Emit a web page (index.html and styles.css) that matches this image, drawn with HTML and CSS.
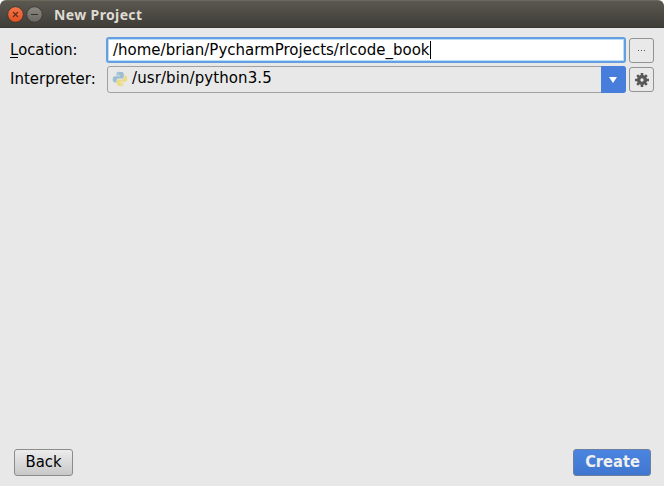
FILE: index.html
```html
<!DOCTYPE html>
<html lang="en">
<head>
<meta charset="utf-8">
<title>New Project</title>
<link rel="stylesheet" href="styles.css">
</head>
<body>
<div class="window">
  <header class="titlebar">
    <svg class="control" viewBox="0 0 17 17"><defs><linearGradient id="orange" x2="0" y2="1"><stop stop-color="#f4774b"/><stop offset="1" stop-color="#e5501f"/></linearGradient></defs><circle cx="8.5" cy="8.5" r="7.8" fill="url(#orange)" stroke="#34332e" stroke-width=".8"/><path d="M6 6l5 5M11 6l-5 5" stroke="#5b2f1c" stroke-width="1.1"/></svg>
    <svg class="control" viewBox="0 0 17 17"><defs><linearGradient id="gray" x2="0" y2="1"><stop stop-color="#8b8982"/><stop offset="1" stop-color="#696760"/></linearGradient></defs><circle cx="8.5" cy="8.5" r="7.8" fill="url(#gray)" stroke="#34332e" stroke-width=".8"/><path d="M5 8.5h7" stroke="#34332e"/></svg>
    <h1 class="title">New Project</h1>
  </header>
  <main class="form">
    <label class="label location"><span class="mnemonic">L</span>ocation:</label>
    <div class="input"><span class="path">/home/brian/PycharmProjects/rlcode_book</span><span class="caret"></span></div>
    <button class="tool dots"><i></i><i></i><i></i></button>
    <label class="label">Interpreter:</label>
    <div class="combo">
      <svg class="python" viewBox="0 0 16 16"><path fill="#9dbdd0" d="M7.8.8C5.2.8 4.4 1.6 4.4 3v1.6h3.8v.6H3C1.4 5.2.7 6.6.7 8.3s.8 3.2 2.2 3.2h1.6V9.8c0-1.4 1-2.2 2.4-2.2h3.1c1.1 0 1.8-.8 1.8-1.9V3c0-1.4-1.4-2.2-4-2.2z"/><path fill="#ecdb86" d="M8.2 15.2c2.6 0 3.4-.8 3.4-2.2v-1.6H7.8v-.6H13c1.6 0 2.3-1.4 2.3-3.1s-.8-3.2-2.2-3.2h-.8v1.8c0 1.4-1 2.2-2.4 2.2H6.7c-1.1 0-1.9.8-1.9 1.9V13c0 1.4 1.2 2.2 3.4 2.2z"/><circle cx="6.2" cy="2.9" r=".6" fill="#d8e4ea"/><circle cx="9.8" cy="13.1" r=".6" fill="#faf7df"/></svg>
      <span class="value">/usr/bin/python3.5</span>
      <span class="arrow"><svg width="8" height="6" viewBox="0 0 8 6"><path d="M0 0h8L4 6z" fill="#fff"/></svg></span>
    </div>
    <button class="tool"><svg width="14" height="14" viewBox="-7 -7 14 14"><g stroke="#585858" stroke-width="2.6"><path d="M0-7V-3M0 3V7M-7 0H-3M3 0H7M-4.8-4.8L-2.2-2.2M2.2 2.2L4.8 4.8M-4.8 4.8L-2.2 2.2M2.2-2.2L4.8-4.8"/></g><circle r="3.4" fill="none" stroke="#585858" stroke-width="3.4"/></svg></button>
  </main>
  <footer class="actions">
    <button class="button back">Back</button>
    <button class="button create">Create</button>
  </footer>
</div>
</body>
</html>
```
FILE: styles.css
```css
* { box-sizing: border-box; }
body { margin: 0; background: #fff; }
.window {
  width: 664px; height: 486px;
  display: flex; flex-direction: column;
  background: #e8e8e8;
  border-radius: 6px 6px 0 0;
  overflow: hidden;
  color: #000;
  font: 16.67px/20px "DejaVu Sans Condensed", "DejaVu Sans", sans-serif;
  font-stretch: condensed;
}
.titlebar {
  height: 28px; flex: none;
  display: flex; align-items: center; gap: 2px;
  padding: 1px 7px 0;
  background: linear-gradient(#5b5850, #3e3d38);
  border-top: 1px solid #6a675f;
  border-bottom: 1px solid #393833;
}
.control { width: 17px; height: 17px; flex: none; }
.title {
  margin: 0 0 0 9px;
  color: #dfdbd2;
  font: bold 14px/20px "Noto Sans", sans-serif;
  letter-spacing: .37px;
  white-space: nowrap;
}
.form {
  flex: 1;
  display: grid;
  grid-template-columns: 96px 520px 25px;
  grid-template-rows: 26px 27px;
  row-gap: 3px; column-gap: 0;
  padding: 9px 10px 0;
  align-content: start;
}
.label { padding-top: 3px; white-space: nowrap; }
.location { font-size: 16.4px; }
.mnemonic { border-bottom: 1px solid #000; display: inline-block; height: 18px; }
.input {
  display: flex; align-items: center;
  height: 26px;
  padding: 0 4px 0 5px;
  background: #fff;
  border: 2px solid #649fe0;
  border-radius: 3px;
  box-shadow: inset 0 0 0 1px #bcdafa;
}
.path { letter-spacing: .015px; }
.caret { width: 1px; height: 18px; background: #000; }
.combo {
  display: flex; align-items: center;
  height: 27px;
  margin-left: 1px;
  padding-left: 4px;
  border: 1px solid #a0a0a0;
  border-radius: 3px;
  background: #e8e8e8;
}
.python { width: 16px; height: 16px; margin: -2px 4px 0 0; }
.value { margin-top: -3px; letter-spacing: .1px; }
.arrow {
  display: flex; align-items: center; justify-content: center;
  width: 25px; height: 27px;
  margin: -1px -1px -1px auto;
  padding-right: 1px;
  background: #477edb;
  border-radius: 0 3px 3px 0;
}
.tool {
  display: flex; align-items: center; justify-content: center;
  width: 25px; height: 25px;
  margin: 1px 0 0 3px;
  padding: 0;
  border: 1px solid #929292;
  border-radius: 3px;
  background: #e9e9e9;
}
.dots { gap: 2px; }
.dots i { width: 1px; height: 1px; background: #555; }
.actions {
  display: flex; justify-content: space-between;
  padding: 0 13px 10px 14px;
}
.button {
  height: 27px; padding: 0 0 2px;
  border: 1px solid #8c8c8c;
  border-radius: 3px;
  font: inherit;
}
.back { width: 59px; font-size: 16.5px; color: #000; background: linear-gradient(#ececec, #c8c8c8); }
.create {
  width: 78px;
  padding-left: 1px;
  color: #f0f0f0;
  font-weight: bold;
  font-size: 16.3px;
  border-color: #6c7f9f;
  background: linear-gradient(#4a85e1, #4076cf);
}
```
